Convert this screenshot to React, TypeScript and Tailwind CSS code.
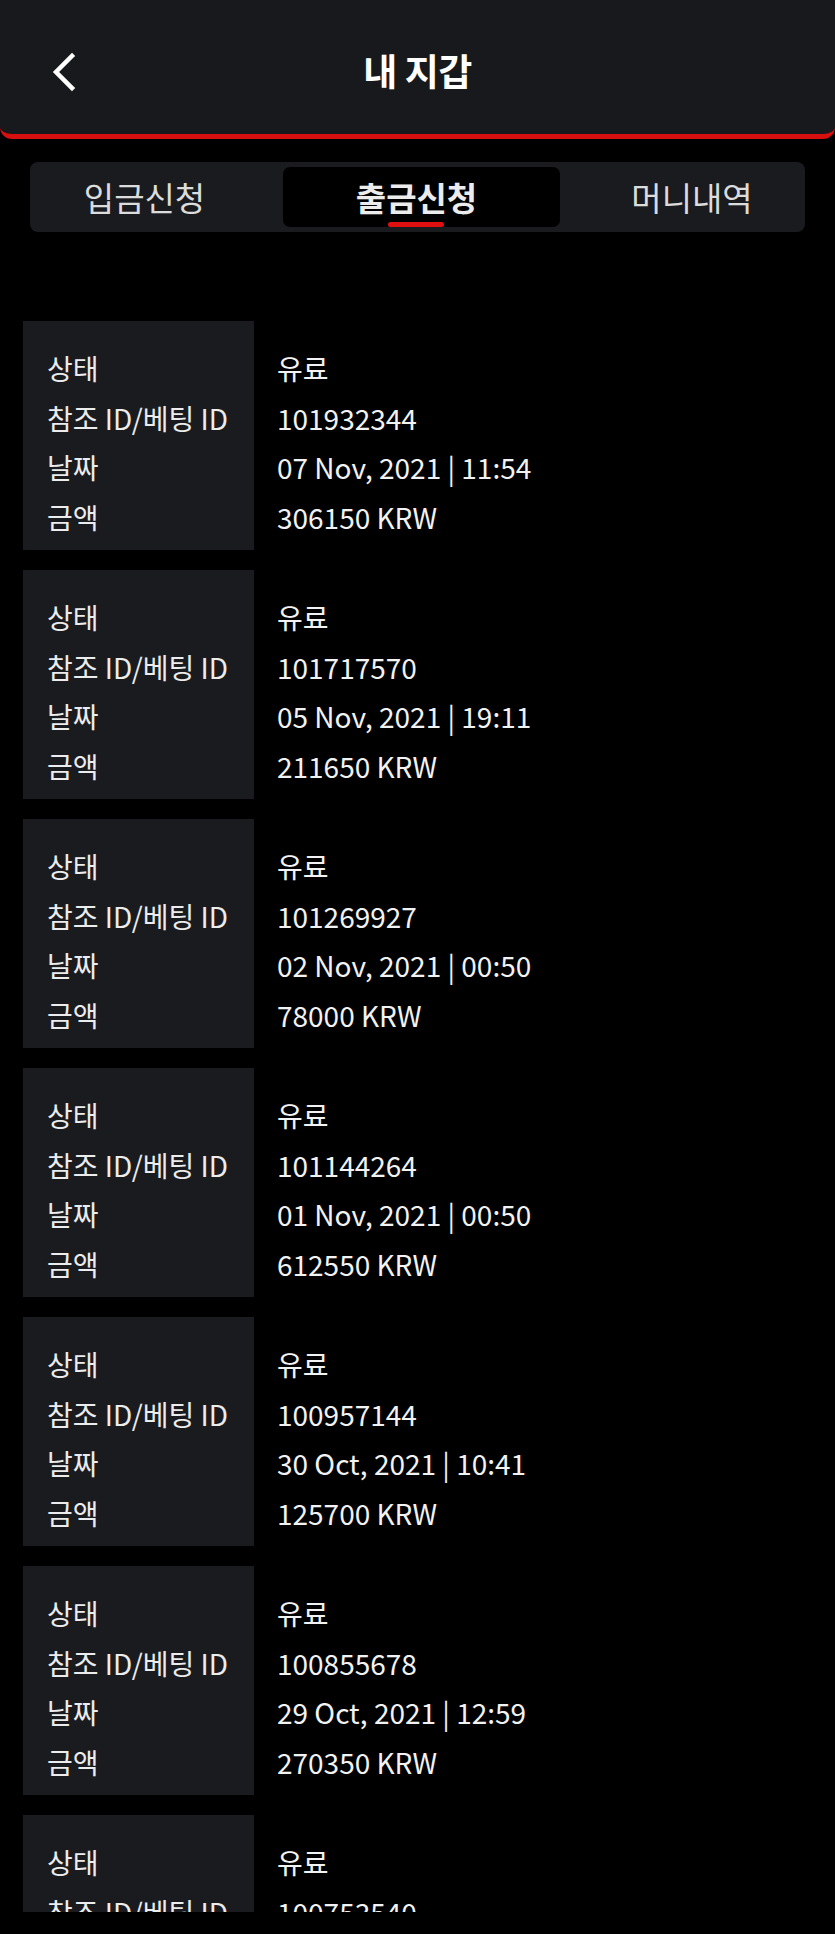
import React from 'react';

type Withdrawal = {
  refId: string;
  date: string;
  amount: string;
};

const withdrawals: Withdrawal[] = [
  { refId: '101932344', date: '07 Nov, 2021 | 11:54', amount: '306150 KRW' },
  { refId: '101717570', date: '05 Nov, 2021 | 19:11', amount: '211650 KRW' },
  { refId: '101269927', date: '02 Nov, 2021 | 00:50', amount: '78000 KRW' },
  { refId: '101144264', date: '01 Nov, 2021 | 00:50', amount: '612550 KRW' },
  { refId: '100957144', date: '30 Oct, 2021 | 10:41', amount: '125700 KRW' },
  { refId: '100855678', date: '29 Oct, 2021 | 12:59', amount: '270350 KRW' },
  { refId: '100753540', date: '28 Oct, 2021 | 09:27', amount: '154000 KRW' },
];

const labels = ['상태', '참조 ID/베팅 ID', '날짜', '금액'];

function WithdrawalCard({ item }: { item: Withdrawal }) {
  const values = ['유료', item.refId, item.date, item.amount];

  return (
    <div className="flex h-[229px] shrink-0">
      <div className="w-[231px] bg-[#1a1b1f] pl-[24px] pt-[23px] text-[#ececec]">
        {labels.map((label) => (
          <div key={label} className="h-[49.6px] leading-[49.6px] whitespace-nowrap">
            {label}
          </div>
        ))}
      </div>
      <div className="pl-[23px] pt-[23px] text-[#f2f2f2]">
        {values.map((value, i) => (
          <div key={i} className="h-[49.6px] leading-[49.6px] whitespace-nowrap">
            {value}
          </div>
        ))}
      </div>
    </div>
  );
}

export default function App() {
  return (
    <div className="min-h-[1934px] bg-black font-['Noto_Sans_CJK_KR','Noto_Sans',sans-serif] text-white">
      {/* Header */}
      <header className="relative flex h-[139px] items-center justify-center rounded-b-[12px] border-b-[5px] border-[#d70f0f] bg-[#18191d] pt-[6px]">
        <button type="button" className="absolute left-[48px] top-[48px] p-[4px]">
          <svg width="26" height="40" viewBox="0 0 26 40" fill="none">
            <path
              d="M20 4L4 20l16 16"
              stroke="white"
              strokeWidth={4.5}
              strokeLinecap="square"
            />
          </svg>
        </button>
        <h1 className="text-[37px] font-bold leading-none tracking-[-0.5px]">내 지갑</h1>
      </header>

      {/* Tabs */}
      <nav className="mx-[30px] mt-[23px] flex h-[70px] items-stretch rounded-[8px] bg-[#1a1b1f] p-[5px] text-[33px] leading-none">
        <button type="button" className="flex w-[219px] items-center justify-center text-[#dcdcdc]">
          입금신청
        </button>
        <button
          type="button"
          className="relative ml-[29px] flex w-[277px] items-center justify-center rounded-[7px] bg-black font-bold text-[#ececec]"
        >
          <span className="relative -left-[5px]">
            출금신청
            <span className="absolute -bottom-[13px] left-1/2 h-[5px] w-[56px] -translate-x-1/2 rounded-full bg-[#e01010]" />
          </span>
        </button>
        <button type="button" className="ml-[24px] flex w-[216px] items-center justify-center text-[#dcdcdc]">
          머니내역
        </button>
      </nav>

      {/* Withdrawal list */}
      <div className="mt-[89px] flex h-[1591px] flex-col gap-[20px] overflow-hidden px-[23px] text-[28px]">
        {withdrawals.map((item) => (
          <WithdrawalCard key={item.refId} item={item} />
        ))}
      </div>
    </div>
  );
}
